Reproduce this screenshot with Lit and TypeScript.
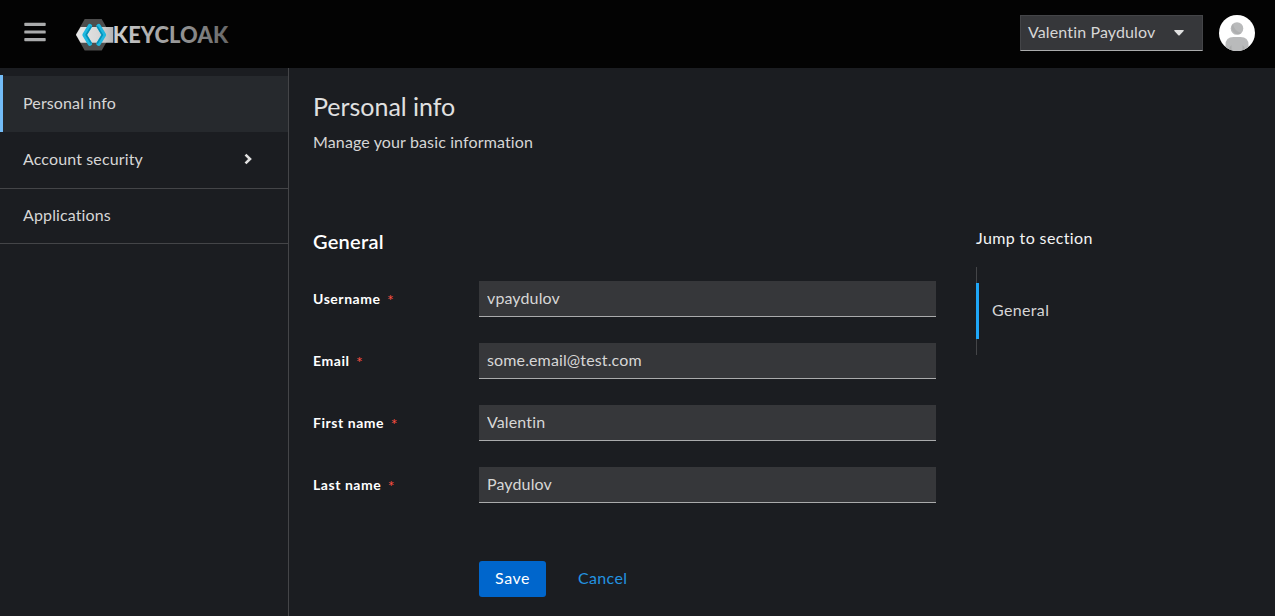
import { LitElement, html, css } from "lit";
import { customElement } from "lit/decorators.js";

const fields = [
  { label: "Username", value: "vpaydulov", kind: "username" },
  { label: "Email", value: "some.email@test.com", kind: "email" },
  { label: "First name", value: "Valentin", kind: "first" },
  { label: "Last name", value: "Paydulov", kind: "last" },
];

@customElement("keycloak-logo")
export class KeycloakLogo extends LitElement {
  static styles = css`
    :host { display: block; width: 154px; height: 32px; }
    svg { display: block; }
    .word { font: 900 21.8px Lato, sans-serif; }
    .chev { fill: none; stroke-linejoin: round; stroke-linecap: round; }
  `;
  render() {
    return html`<svg width="154" height="32" viewBox="0 0 154 32" aria-label="Keycloak">
      <defs>
        <linearGradient id="word" x1="0" x2="1">
          <stop offset="0" stop-color="#d0d0d0" /><stop offset="1" stop-color="#686868" />
        </linearGradient>
        <linearGradient id="band" x1="0" x2="1">
          <stop offset="0" stop-color="#e8e8e8" /><stop offset=".6" stop-color="#d8d8d8" /><stop offset="1" stop-color="#b4b4b4" />
        </linearGradient>
      </defs>
      <path d="M9.500 0h17L35.500 15.700l-9 15.700h-17L.500 15.700z" transform="translate(-.8)" fill="#4d4d4d" />
      <path d="M4.600 8H37.300v15.700H4.600L0 15.800z" fill="url(#band)" />
      <path class="chev" d="M13.900 7.200 8.600 15.900l5.300 8.700" stroke="#1fb8df" stroke-width="4.500" />
      <path class="chev" d="M15 7.800 10.100 15.900 15 24" stroke="#0590b8" stroke-width="1.500" />
      <path class="chev" d="M22.600 7.200 27.900 15.900l-5.300 8.700" stroke="#1fb8df" stroke-width="4.500" />
      <path class="chev" d="M21.500 7.800 26.400 15.900 21.500 24" stroke="#0590b8" stroke-width="1.500" />
      <text x="36.800" y="24" textLength="115.500" lengthAdjust="spacingAndGlyphs" class="word" fill="url(#word)">KEYCLOAK</text>
    </svg>`;
  }
}

@customElement("app-root")
export class AppRoot extends LitElement {
  static styles = css`
    :host {
      display: flex; flex-direction: column; height: 616px; overflow: hidden;
      background: #1b1d21; color: #d6d6d6;
      font: 400 16px/24px Lato, sans-serif; letter-spacing: .13px;
      font-variant-ligatures: none;
    }
    * { box-sizing: border-box; }
    h1, h2, p { margin: 0; }
    button, input { font: inherit; letter-spacing: inherit; color: inherit; border: 0; margin: 0; border-radius: 0; }
    svg { display: block; }
    header { flex: none; height: 68px; background: #030303; display: flex; align-items: center; padding: 0 20px 2px 24px; }
    .burger { width: 22px; height: 20px; margin-bottom: 2px; fill: #aaabac; }
    keycloak-logo { margin: 4px 0 0 30px; }
    .user {
      margin-left: auto; width: 183px; height: 36px; padding: 0 18px 1px 7px;
      display: flex; align-items: center; justify-content: space-between;
      background: #36373a; border: 1px solid #444548; border-bottom-color: #aaabac;
    }
    .user span { padding-bottom: 2px; }
    .avatar { margin-left: 16px; }
    .body { flex: 1; display: flex; min-height: 0; }
    nav { flex: none; width: 289px; border-right: 1px solid #444548; padding-top: 7px; }
    .item { display: flex; align-items: center; justify-content: space-between; height: 56px; padding: 0 36px 2px 23px; border-bottom: 1px solid #444548; }
    .item.active { height: 57px; padding: 0 0 1px 20px; border: 0; border-left: 3px solid #73bcf7; background: linear-gradient(#1b1d21 1px, #26292d 1px); }
    .item.sub { height: 57px; }
    .item.last { height: 55px; }
    main { flex: 1; padding: 21px 0 0 24px; }
    h1 { font-weight: 400; font-size: 25px; line-height: 34px; letter-spacing: -.02px; color: #e0e0e0; }
    .lead { margin-top: 7px; }
    .cols { display: flex; gap: 40px; margin-top: 73px; }
    form { width: 623px; }
    h2 { font-weight: 600; font-size: 20px; line-height: 28px; letter-spacing: .25px; color: #fff; }
    .rows { display: grid; gap: 26px; margin-top: 26px; }
    .row { display: grid; grid-template-columns: 166px 457px; align-items: center; }
    label { display: flex; font-weight: 700; font-size: 14px; line-height: 20px; letter-spacing: .55px; color: #fff; }
    .req { color: #fa4f41; font-weight: 400; font-size: 16px; margin-left: 6.5px; padding-top: 1px; line-height: 19px; height: 20px; }
    input { width: 100%; height: 36px; padding: 0 8px 2px; background: #36373a; border-bottom: 1px solid #aaabac; outline: 0; }
    .actions { display: flex; margin: 58px 0 0 166px; }
    .save { width: 67px; height: 36px; padding: 0 0 2px; border-radius: 3px; background: #06c; color: #fff; letter-spacing: .5px; }
    .cancel { padding: 0 0 2px 32px; background: none; color: #2393e0; letter-spacing: .35px; }
    .jump { line-height: 24px; }
    .jump .title { color: #f4f4f4; letter-spacing: .38px; margin-top: -1px; }
    .track { margin-top: 17px; padding: 16px 0; height: 88px; background: linear-gradient(#444548, #444548) no-repeat 0 0 / 1px 100%; }
    .here { height: 56px; display: flex; align-items: center; padding: 0 0 2px 13px; border-left: 3px solid #1fa7f8; letter-spacing: .35px; }
  `;

  render() {
    return html`
      <header>
        <svg class="burger" viewBox="0 0 22 20"><rect x=".3" y=".8" width="21.400" height="3.200" rx=".7" /><rect x=".3" y="8.400" width="21.400" height="3.200" rx=".7" /><rect x=".3" y="16" width="21.400" height="3.200" rx=".7" /></svg>
        <keycloak-logo></keycloak-logo>
        <button class="user"><span>Valentin Paydulov</span><svg width="10" height="6" viewBox="0 0 10 6"><path d="M.8 0h8.400q1 .2.400 1L5.700 5.200q-.7.600-1.400 0L.4 1Q-.2.200.8 0z" fill="#e0e0e0" /></svg></button>
        <svg class="avatar" width="36" height="36" viewBox="0 0 36 36">
          <defs><clipPath id="disc"><circle cx="18" cy="18" r="18" /></clipPath></defs>
          <g clip-path="url(#disc)">
            <rect width="36" height="36" fill="#fff" />
            <path d="M6.500 36V30q0-8 8-8h7q8 0 8 8v6z" fill="#b9babb" />
            <path d="M12.500 36v-6l-2 2.500V36zM23.500 36v-6l2 2.500V36z" fill="#a9aaab" />
            <circle cx="18" cy="13.500" r="6.300" fill="#b9babb" />
            <path d="M14 9q1 7 8.500 9A6.300 6.300 0 0 1 14 9z" fill="#aeafb0" />
          </g>
        </svg>
      </header>
      <div class="body">
        <nav>
          <div class="item active">Personal info</div>
          <div class="item sub">Account security<svg width="8" height="12" viewBox="0 0 8 12"><path d="M1.500 1.600 6 6l-4.500 4.400" fill="none" stroke="#e0e0e0" stroke-width="2.600" /></svg></div>
          <div class="item last">Applications</div>
        </nav>
        <main>
          <h1>Personal info</h1>
          <p class="lead">Manage your basic information</p>
          <div class="cols">
            <form>
              <h2>General</h2>
              <div class="rows">
                ${fields.map(f => html`<div class="row"><label for=${f.kind}>${f.label}<span class="req">*</span></label><input id=${f.kind} .value=${f.value} /></div>`)}
              </div>
              <div class="actions"><button type="button" class="save">Save</button><button type="button" class="cancel">Cancel</button></div>
            </form>
            <div class="jump">
              <div class="title">Jump to section</div>
              <div class="track"><div class="here">General</div></div>
            </div>
          </div>
        </main>
      </div>`;
  }
}
